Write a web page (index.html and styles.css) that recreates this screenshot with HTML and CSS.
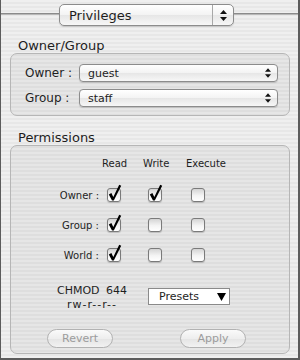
FILE: index.html
```html
<!DOCTYPE html>
<html lang="en">
<head>
    <meta charset="UTF-8">
    <meta name="viewport" content="width=device-width, initial-scale=1.0">
    <title>Privileges</title>
    <link rel="stylesheet" href="styles.css">
</head>
<body>
    <div class="panel">
        <div class="header">
            <span class="rule rule-left"></span>
            <div class="popup popup-large">
                <span class="popup-label">Privileges</span>
                <span class="stepper stepper-divided">
                    <svg width="7" height="11" viewBox="0 0 7 11"><polygon points="0,4 3.5,0 7,4"/><polygon points="0,7 7,7 3.5,11"/></svg>
                </span>
            </div>
            <span class="rule"></span>
        </div>

        <h2 class="section-title">Owner/Group</h2>
        <div class="groupbox owner-box">
            <label class="field-label">Owner :</label>
            <div class="popup popup-small">
                <span class="popup-label">guest</span>
                <span class="stepper">
                    <svg width="6" height="10" viewBox="0 0 7 11"><polygon points="0,4 3.5,0 7,4"/><polygon points="0,7 7,7 3.5,11"/></svg>
                </span>
            </div>
            <label class="field-label">Group :</label>
            <div class="popup popup-small">
                <span class="popup-label">staff</span>
                <span class="stepper">
                    <svg width="6" height="10" viewBox="0 0 7 11"><polygon points="0,4 3.5,0 7,4"/><polygon points="0,7 7,7 3.5,11"/></svg>
                </span>
            </div>
        </div>

        <h2 class="section-title section-perm">Permissions</h2>
        <div class="groupbox perm-box">
            <div class="perm-grid">
                <span></span>
                <span class="head">Read</span>
                <span class="head">Write</span>
                <span class="head">Execute</span>

                <span class="row-label">Owner :</span>
                <span class="check"><svg viewBox="0 0 14 14"><path d="M1.8 6.4 L4.4 5 L6.3 9 L12.2 -3.2 L14.2 -2.2 L6.8 12.4 L5 12.4 Z"/></svg></span>
                <span class="check"><svg viewBox="0 0 14 14"><path d="M1.8 6.4 L4.4 5 L6.3 9 L12.2 -3.2 L14.2 -2.2 L6.8 12.4 L5 12.4 Z"/></svg></span>
                <span class="check"></span>

                <span class="row-label">Group :</span>
                <span class="check"><svg viewBox="0 0 14 14"><path d="M1.8 6.4 L4.4 5 L6.3 9 L12.2 -3.2 L14.2 -2.2 L6.8 12.4 L5 12.4 Z"/></svg></span>
                <span class="check"></span>
                <span class="check"></span>

                <span class="row-label">World :</span>
                <span class="check"><svg viewBox="0 0 14 14"><path d="M1.8 6.4 L4.4 5 L6.3 9 L12.2 -3.2 L14.2 -2.2 L6.8 12.4 L5 12.4 Z"/></svg></span>
                <span class="check"></span>
                <span class="check"></span>
            </div>

            <div class="chmod-row">
                <div class="chmod">
                    <div class="chmod-code">CHMOD <span class="octal">644</span></div>
                    <div class="chmod-mode">rw-r--r--</div>
                </div>
                <div class="presets">
                    <span>Presets</span>
                    <svg width="9" height="8" viewBox="0 0 9 8"><polygon points="0,0 9,0 4.5,8"/></svg>
                </div>
            </div>

            <div class="buttons">
                <button disabled>Revert</button>
                <button disabled>Apply</button>
            </div>
        </div>
    </div>
</body>
</html>
```

FILE: styles.css
```css
body {
    margin: 0;
    font-family: 'DejaVu Sans', 'Noto Sans', sans-serif;
    color: #1e1e1e;
    background-color: #ececec;
}
.panel {
    width: 300px;
    height: 360px;
    box-sizing: border-box;
    padding-top: 4px;
    border-left: 1px solid #5c5c5c;
    border-right: 2px solid #5c5c5c;
    border-bottom: 2px solid #5c5c5c;
    background: repeating-linear-gradient(to bottom, #efefef 0, #efefef 2px, #e7e7e7 2px, #e7e7e7 4px);
}
.header {
    display: flex;
    align-items: flex-start;
}
.rule {
    flex: 1;
    height: 1px;
    margin-top: 9px;
    background-color: #8a8a8a;
    border-bottom: 1px solid #b8b8b8;
}
.rule-left {
    flex: 0 0 58px;
}
.popup {
    display: flex;
    align-items: stretch;
    box-sizing: border-box;
    border: 1px solid #8c8c8c;
    border-radius: 5px;
    background: linear-gradient(to bottom, #ffffff 0%, #f3f3f3 50%, #e6e6e6 51%, #f7f7f7 100%);
    box-shadow: 0 1px 1px rgba(0, 0, 0, 0.15);
}
.popup-large {
    width: 175px;
    height: 22px;
    font-size: 13px;
}
.popup-small {
    width: 199px;
    height: 18px;
    font-size: 11px;
    border-radius: 4px;
}
.popup-label {
    flex: 1;
    display: flex;
    align-items: center;
    padding-left: 8px;
}
.popup-large .popup-label {
    padding-left: 9px;
}
.stepper {
    display: flex;
    align-items: center;
    justify-content: center;
    width: 18px;
}
.stepper-divided {
    width: 20px;
    border-left: 1px solid #a8a8a8;
}
.stepper svg {
    fill: #111;
}
.section-title {
    margin: 12px 0 0 17px;
    font-size: 13px;
    font-weight: normal;
    line-height: 15px;
}
.section-perm {
    margin-top: 14px;
}
.groupbox {
    width: 280px;
    margin-left: 9px;
    box-sizing: border-box;
    border: 1px solid #b6b6b6;
    border-radius: 7px;
    background-color: rgba(0, 0, 0, 0.035);
}
.owner-box {
    display: grid;
    grid-template-columns: 54px 199px;
    row-gap: 7px;
    align-items: center;
    padding: 10px 0 8px 14px;
}
.field-label {
    font-size: 12px;
}
.perm-box {
    padding: 11px 0 5px 0;
}
.perm-grid {
    display: grid;
    grid-template-columns: 89px 41px 43px 60px;
    grid-template-rows: 23px repeat(3, 30px);
    align-items: center;
    font-size: 10px;
}
.head {
    align-self: start;
    line-height: 14px;
    padding-left: 2px;
}
.row-label {
    text-align: right;
    padding-right: 1px;
}
.check {
    position: relative;
    width: 14px;
    height: 14px;
    margin-left: 7px;
    box-sizing: border-box;
    border: 1px solid #7a7a7a;
    border-radius: 3px;
    background: linear-gradient(to bottom, #d4d4d4 0%, #f4f4f4 55%, #ffffff 100%);
    box-shadow: 0 1px 1px rgba(0, 0, 0, 0.18);
}
.check svg {
    position: absolute;
    left: -1px;
    top: -1px;
    width: 14px;
    height: 14px;
    overflow: visible;
    fill: #000;
}
.chmod-row {
    display: flex;
    align-items: flex-start;
    margin-top: 14px;
}
.chmod {
    width: 112px;
    margin-left: 25px;
    text-align: center;
    font-size: 11px;
    line-height: 14px;
}
.octal {
    margin-left: 3px;
}
.chmod-mode {
    letter-spacing: 1px;
}
.presets {
    display: flex;
    align-items: center;
    justify-content: space-between;
    width: 82px;
    height: 17px;
    margin-top: 4px;
    box-sizing: border-box;
    padding: 0 3px 0 10px;
    border: 1px solid #8a8a8a;
    background-color: #fff;
    font-size: 11px;
}
.presets svg {
    fill: #000;
}
.buttons {
    display: flex;
    gap: 67px;
    margin: 17px 0 0 36px;
}
button {
    width: 66px;
    height: 19px;
    padding: 0;
    border: 1px solid #b2b2b2;
    border-radius: 10px;
    background: linear-gradient(to bottom, #fafafa 0%, #eeeeee 50%, #e4e4e4 51%, #f2f2f2 100%);
    color: #9c9c9c;
    font-family: 'DejaVu Sans', 'Noto Sans', sans-serif;
    font-size: 11px;
}
```
